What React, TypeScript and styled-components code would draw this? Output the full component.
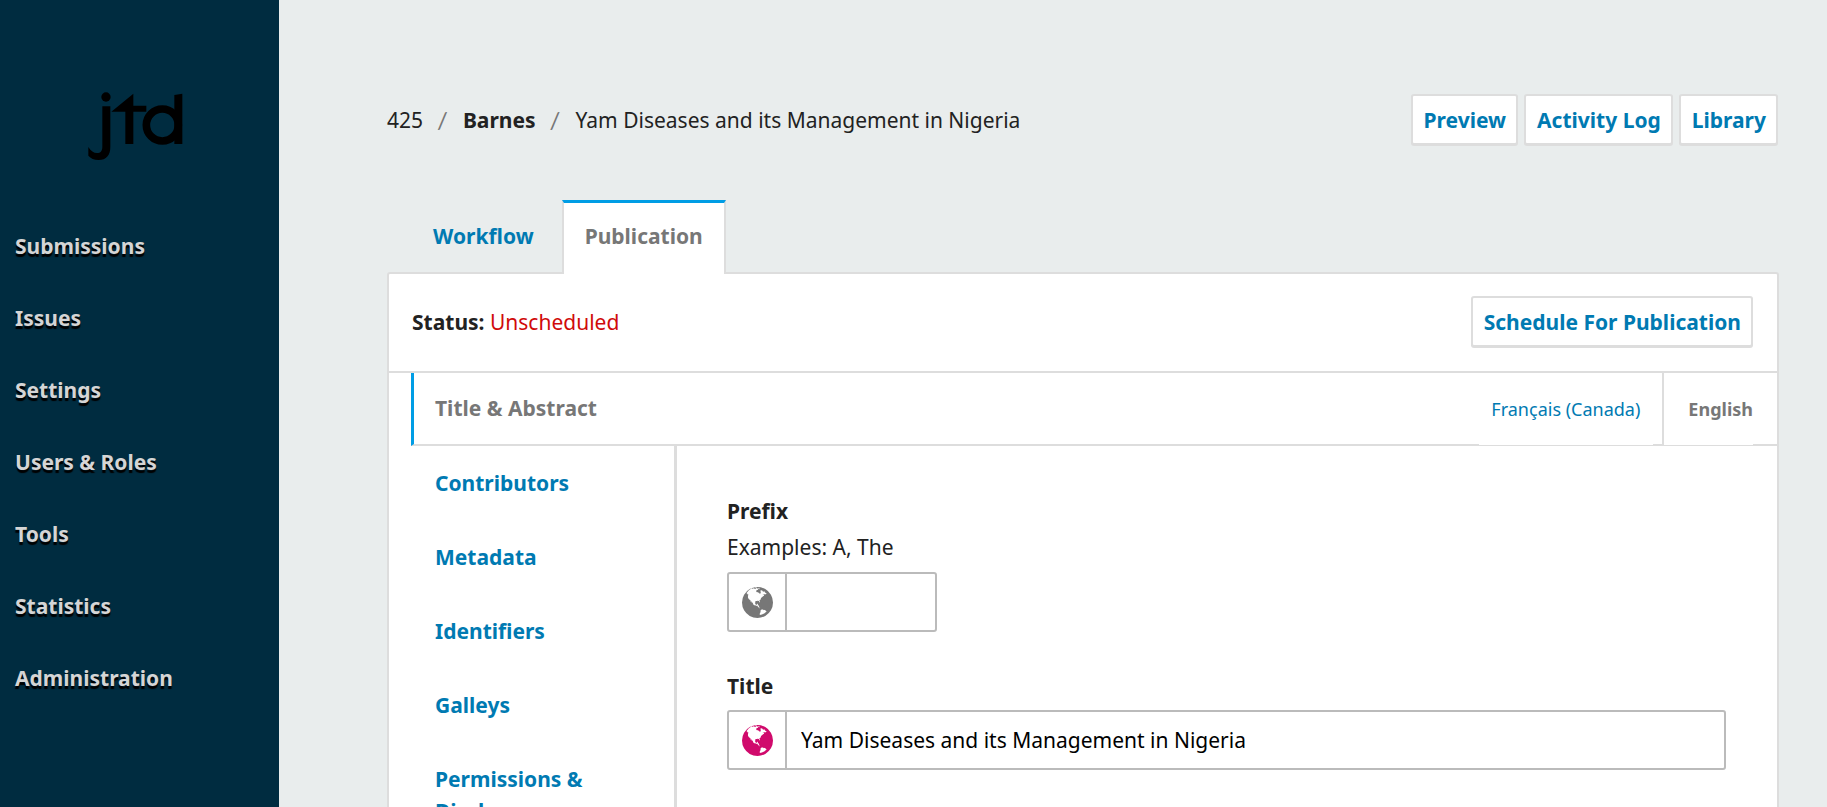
import React from 'react';
import styled, { createGlobalStyle } from 'styled-components';

const color = {
  navy: '#002c40',
  page: '#e9eded',
  line: '#dddddd',
  field: '#bbbbbb',
  link: '#007ab2',
  accent: '#009de5',
  text: '#222222',
  muted: '#777777',
  alert: '#d00a0a',
  filled: '#d00a6c',
};

const GlobalStyle = createGlobalStyle`
  *, *::before, *::after { box-sizing: border-box; }
  body {
    margin: 0;
    background: ${color.page};
    color: ${color.text};
    font-family: "Noto Sans", sans-serif;
    font-size: 21px;
    line-height: 30px;
  }
  button, input { font: inherit; }
  button { cursor: pointer; }
`;

const Shell = styled.div`
  display: flex;
  height: 100vh;
  overflow: hidden;
`;

const Sidebar = styled.aside`
  flex: 0 0 279px;
  background: ${color.navy};
`;

const LogoLink = styled.a`
  display: block;
  padding: 92px 0 0 88px;
  color: #000;

  svg { display: block; width: 95px; height: 69px; }
`;

const NavList = styled.nav`
  display: flex;
  flex-direction: column;
  gap: 42px;
  padding: 70px 15px 0;
`;

const NavLink = styled.a`
  color: #d5d5d5;
  font-weight: 700;
  text-decoration: none;
  text-shadow: 0 3px 1px #000;
`;

const Main = styled.main`
  display: flex;
  flex: 1;
  flex-direction: column;
  min-width: 0;
  padding: 94px 48px 0 108px;
`;

const Header = styled.header`
  display: flex;
  align-items: center;
  justify-content: space-between;
  padding-right: 1px;
`;

const Breadcrumb = styled.h1`
  display: flex;
  margin: 0;
  font-size: 21px;
  font-weight: 400;
`;

const Slash = styled.span`
  padding: 0 15px 0 14px;
  color: ${color.muted};
  font-family: Lato, sans-serif;
  font-size: 24px;
`;

const Actions = styled.div`
  display: flex;
  gap: 6px;
`;

const Button = styled.button`
  height: 51px;
  padding: 0 10px 0 11px;
  border: 2px solid ${color.line};
  border-radius: 3px;
  background: #fff;
  box-shadow: 0 1px 0 ${color.line};
  color: ${color.link};
  font-weight: 700;
`;

const Tabs = styled.nav`
  display: flex;
  gap: 5px;
  z-index: 1;
  margin: 55px 0 -2px 23px;
`;

const Tab = styled.button<{ $active?: boolean }>`
  height: 74px;
  padding: 0 21px 5px;
  border: 0 solid ${color.line};
  border-width: 3px 2px 0;
  border-color: ${p => (p.$active ? `${color.accent} ${color.line}` : 'transparent')};
  background: ${p => (p.$active ? '#fff' : 'transparent')};
  color: ${p => (p.$active ? color.muted : color.link)};
  font-weight: 700;
`;

const Panel = styled.section`
  flex: 1;
  border: 2px solid ${color.line};
  border-radius: 3px;
  background: #fff;
`;

const StatusBar = styled.div`
  display: flex;
  align-items: center;
  justify-content: space-between;
  height: 99px;
  padding: 0 24px 2px 23px;
  border-bottom: 2px solid ${color.line};
`;

const Status = styled.span`
  color: ${color.alert};
`;

const FormHeader = styled.div`
  display: flex;
  align-items: stretch;
  justify-content: space-between;
  height: 73px;
  margin-left: 22px;
  border-bottom: 2px solid ${color.line};
  border-left: 3px solid ${color.accent};
`;

const SideTab = styled.button<{ $active?: boolean }>`
  padding: ${p => (p.$active ? '0 21px 2px' : '0 21px')};
  border: 0;
  background: transparent;
  color: ${p => (p.$active ? color.muted : color.link)};
  font-weight: 700;
  line-height: 32px;
  text-align: left;
`;

const Locales = styled.div`
  display: flex;
  gap: 9px;
  padding-right: 24px;
`;

const Locale = styled.button<{ $active?: boolean }>`
  margin-bottom: -1px;
  padding: ${p => (p.$active ? '0 0 0 24px' : '0 13px 0 12px')};
  border: 0;
  border-left: ${p => (p.$active ? `2px solid ${color.line}` : '0')};
  background: #fff;
  color: ${p => (p.$active ? color.muted : color.link)};
  font-size: 18px;
  font-weight: ${p => (p.$active ? 700 : 400)};
`;

const Body = styled.div`
  display: flex;
`;

const SideMenu = styled.nav`
  display: flex;
  flex: 0 0 288px;
  flex-direction: column;
  gap: 42px;
  padding: 21px 0 22px 25px;
  border-right: 3px solid ${color.line};
`;

const Form = styled.form`
  display: flex;
  flex: 1;
  flex-direction: column;
  gap: 39px;
  min-width: 0;
  padding: 50px 51px 0 50px;
`;

const Field = styled.div`
  display: flex;
  flex-direction: column;
`;

const Label = styled.label`
  font-weight: 700;
`;

const Hint = styled.p`
  margin: 6px 0 1px;
`;

const Control = styled.div<{ $short?: boolean }>`
  display: flex;
  width: ${p => (p.$short ? '210px' : '100%')};
  height: 60px;
  margin-top: 9px;
  border: 2px solid ${color.field};
  border-radius: 3px;
`;

const GlobeCell = styled.span<{ $filled?: boolean }>`
  display: flex;
  flex: 0 0 58px;
  align-items: center;
  justify-content: center;
  border-right: 2px solid ${color.field};
  color: ${p => (p.$filled ? color.filled : color.muted)};
`;

const TextInput = styled.input`
  flex: 1;
  min-width: 0;
  padding: 0 14px;
  border: 0;
  outline: 0;
  background: transparent;
  color: #000;
`;

const GLOBE =
  'M768 128q209 0 385.500 103t279.500 279.500 103 385.500-103 385.500-279.500 279.500-385.500 103-385.500-103-279.500-279.500-103-385.500 103-385.500 279.500-279.500 385.500-103zM1042 521q-2 1-9.500 9.500t-13.500 9.500q2 0 4.500-5t5-11 3.500-7q6-7 22-15 14-6 52-12 34-8 51 11-2-2 9.500-13t14.500-12q3-2 15-4.500t15-7.500l2-22q-12 1-17.500-7t-6.500-21q0 2-6 8 0-7-4.500-8t-11.500 1-9 1q-10-3-15-7.500t-8-16.500-4-15q-2-5-9.500-10.500t-9.500-10.500q-1-2-2.500-5.500t-3-6.500-4-5.500-5.500-2.500-7 5-7.500 10-4.500 5q-3-2-6-1.500t-4.500 1-4.500 3-5 3.500q-3 2-8.500 3t-8.500 2q15-5-1-11-10-4-16-3 9-4 7.500-12t-8.500-14h5q-1-4-8.500-8.500t-17.500-8.500-13-6q-8-5-34-9.500t-33-.5q-5 6-4.500 10.500t4 14 3.500 12.500q1 6-5.500 13t-6.500 12q0 7 14 15.500t10 21.500q-3 8-16 16t-16 12q-5 8-1.500 18.500t10.500 16.500q2 2 1.500 4t-3.500 4.500-5.500 4-6.500 3.500l-3 2q-11 5-20.500-6t-13.500-26q-7-25-16-30-23-8-29 1-5-13-41-26-25-9-58-4 6-1 0-15-7-15-19-12 3-6 4-17.500t1-13.500q3-13 12-23 1-1 7-8.500t9.500-13.500.5-6q35 4 50-11 5-5 11.500-17t10.500-17q9-6 14-5.500t14.500 5.500 14.500 5q14 1 15.500-11t-7.500-20q12 1 3-17-4-7-8-9-12-4-27 5-8 4 2 8-1-1-9.500 10.500t-16.500 17.500-16-5q-1-1-5.500-13.500t-9.500-13.500q-8 0-16 15 3-8-11-15t-24-8q19-12-8-27-7-4-20.500-5t-19.500 4q-5 7-5.500 11.500t5 8 10.500 5.500 11.500 4 8.500 3q14 10 8 14-2 1-8.500 3.500t-11.500 4.500-6 4q-3 4 0 14t-2 14q-5-5-9-17.500t-7-16.500q7 9-25 6l-10-1q-4 0-16 2t-20.500 1-13.500-8q-4-8 0-20 1-4 4-2-4-3-11-9.500t-10-8.500q-46 15-94 41 6 1 12-1 5-2 13-6.500t10-5.500q34-14 42-7l5-5q14 16 20 25-7-4-30-1-20 6-22 12 7 12 5 18-4-3-11.500-10t-14.500-11-15-5q-16 0-22 1-146 80-235 222 7 7 12 8 4 1 5 9t2.500 11 11.500-3q9 8 3 19 1-1 44 27 19 17 21 21 3 11-10 18-1-2-9-9t-9-4q-3 5 .5 18.500t10.500 12.500q-7 0-9.500 16t-2.500 35.500-1 23.500l2 1q-3 12 5.500 34.500t21.500 19.500q-13 3 20 43 6 8 8 9 3 2 12 7.500t15 10 10 10.500q4 5 10 22.500t14 23.500q-2 6 9.500 20t10.500 23q-1 0-2.500 1t-2.500 1q3 7 15.500 14t15.500 13q1 3 2 10t3 11 8 2q2-20-24-62-15-25-17-29-3-5-5.500-15.500t-4.500-14.500q2 0 6 1.500t8.500 3.500 7.500 4 2 3q-3 7 2 17.500t12 18.500 17 19 12 13q6 6 14 19.500t0 13.500q9 0 20 10.500t17 19.500q5 8 8 26t5 24q2 7 8.500 13.500t12.500 9.500l16 8 13 7q5 2 18.500 10.500t21.500 11.500q10 4 16 4t14.500-2.500 13.500-3.500q15-2 29 15t21 21q36 19 55 11-2 1 .5 7.500t8 15.500 9 14.500 5.500 8.500q5 6 18 15t18 15q6-4 7-9-3 8 7 20t18 10q14-3 14-32-31 15-49-18 0-1-2.500-5.500t-4-8.500-2.500-8.500 0-7.500 5-3q9 0 10-3.500t-2-12.500-4-13q-1-8-11-20t-12-15q-5 9-16 8t-16-9q0 1-1.500 5.500t-1.500 6.500q-13 0-15-1 1-3 2.500-17.500t3.500-22.500q1-4 5.500-12t7.500-14.500 4-12.500-4.500-9.500-17.500-2.500q-19 1-26 20-1 3-3 10.500t-5 11.500-9 7q-7 3-24 2t-24-5q-13-8-22.500-29t-9.500-37q0-10 2.500-26.500t3-25-5.500-24.500q3-2 9-9.500t10-10.500q2-1 4.500-1.500t4.500 0 4-1.500 3-6q-1-1-4-3-3-3-4-3 7 3 28.500-1.500t27.500 1.500q15 11 22-2 0-1-2.500-9.500t-.5-13.500q5 27 29 9 3 3 15.500 5t17.500 5q3 2 7 5.500t5.500 4.500 5-.5 8.500-6.500q10 14 12 24 11 40 19 44 7 3 11 2t4.500-9.500 0-14-1.500-12.500l-1-8v-18l-1-8q-15-3-18.500-12t1.500-18.500 15-18.500q1-1 8-3.500t15.500-6.500 12.500-8q21-19 15-35 7 0 11-9-1 0-5-3t-7.500-5-4.500-2q9-5 2-16 5-3 7.500-11t7.500-10q9 12 21 2 8-8 1-16 5-7 20.500-10.500t18.500-9.500q7 2 8-2t1-12 3-12q4-5 15-9t13-5l17-11q3-4 0-4 18 2 31-11 10-11-6-20 3-6-3-9.500t-15-5.500q3-1 11.500-.5t10.500-1.500q15-10-7-16-17-5-43 12zM879 1521q206-36 351-189-3-3-12.500-4.500t-12.500-3.500q-18-7-24-8 1-7-2.500-13t-8-9-12.500-8-11-7q-2-2-7-6t-7-5.500-7.500-4.500-8.500-2-10 1l-3 1q-3 1-5.500 2.500t-5.500 3-4 3 0 2.500q-21-17-36-22-5-1-11-5.500t-10.500-7-10-1.500-11.500 7q-5 5-6 15t-2 13q-7-5 0-17.500t2-18.500q-3-6-10.500-4.500t-12 4.500-11.500 8.500-9 6.500-8.500 5.500-8.500 7.500q-3 4-6 12t-5 11q-2-4-11.500-6.500t-9.500-5.500q2 10 4 35t5 38q7 31-12 48-27 25-29 40-4 22 12 26 0 7-8 20.500t-7 21.500q0 6 2 16z';

const Globe = () => (
  <svg width="31" height="31" viewBox="0 128 1536 1536" fill="currentColor" aria-hidden="true">
    <path d={GLOBE} />
  </svg>
);

const Logo = () => (
  <svg viewBox="263 96 285 207" fill="currentColor" role="img" aria-label="jtd">
    <circle cx="317" cy="111" r="14" />
    <path d="M306 139h24v122c0 25-12 39-35 39-14 0-24-5-31-13v-26c8 12 16 18 26 18 11 0 16-7 16-19z" />
    <path d="M333 155l66-54v36h39v18h-39v97h-24v-97z" />
    <circle cx="486" cy="195" r="48" fill="none" stroke="currentColor" strokeWidth="23" />
    <path d="M522 105l24-4v151h-24z" />
  </svg>
);

const NAV = ['Submissions', 'Issues', 'Settings', 'Users & Roles', 'Tools', 'Statistics', 'Administration'];
const SECTIONS = ['Contributors', 'Metadata', 'Identifiers', 'Galleys', 'Permissions & Disclosure'];

export default function App() {
  return (
    <>
      <GlobalStyle />
      <Shell>
        <Sidebar>
          <LogoLink href="#home"><Logo /></LogoLink>
          <NavList aria-label="Site">
            {NAV.map(item => <NavLink key={item} href="#nav">{item}</NavLink>)}
          </NavList>
        </Sidebar>
        <Main>
          <Header>
            <Breadcrumb>
              <span>425</span>
              <Slash>/</Slash>
              <strong>Barnes</strong>
              <Slash>/</Slash>
              <span>Yam Diseases and its Management in Nigeria</span>
            </Breadcrumb>
            <Actions>
              <Button type="button">Preview</Button>
              <Button type="button">Activity Log</Button>
              <Button type="button">Library</Button>
            </Actions>
          </Header>
          <Tabs aria-label="Submission">
            <Tab type="button">Workflow</Tab>
            <Tab type="button" $active>Publication</Tab>
          </Tabs>
          <Panel>
            <StatusBar>
              <div><strong>Status:</strong> <Status>Unscheduled</Status></div>
              <Button type="button">Schedule For Publication</Button>
            </StatusBar>
            <FormHeader>
              <SideTab type="button" $active>Title &amp; Abstract</SideTab>
              <Locales>
                <Locale type="button">Français (Canada)</Locale>
                <Locale type="button" $active>English</Locale>
              </Locales>
            </FormHeader>
            <Body>
              <SideMenu aria-label="Publication sections">
                {SECTIONS.map(item => <SideTab key={item} type="button">{item}</SideTab>)}
              </SideMenu>
              <Form>
                <Field>
                  <Label htmlFor="prefix">Prefix</Label>
                  <Hint id="prefix-hint">Examples: A, The</Hint>
                  <Control $short>
                    <GlobeCell><Globe /></GlobeCell>
                    <TextInput id="prefix" type="text" aria-describedby="prefix-hint" />
                  </Control>
                </Field>
                <Field>
                  <Label htmlFor="title">Title</Label>
                  <Control>
                    <GlobeCell $filled><Globe /></GlobeCell>
                    <TextInput id="title" type="text" defaultValue="Yam Diseases and its Management in Nigeria" />
                  </Control>
                </Field>
              </Form>
            </Body>
          </Panel>
        </Main>
      </Shell>
    </>
  );
}
